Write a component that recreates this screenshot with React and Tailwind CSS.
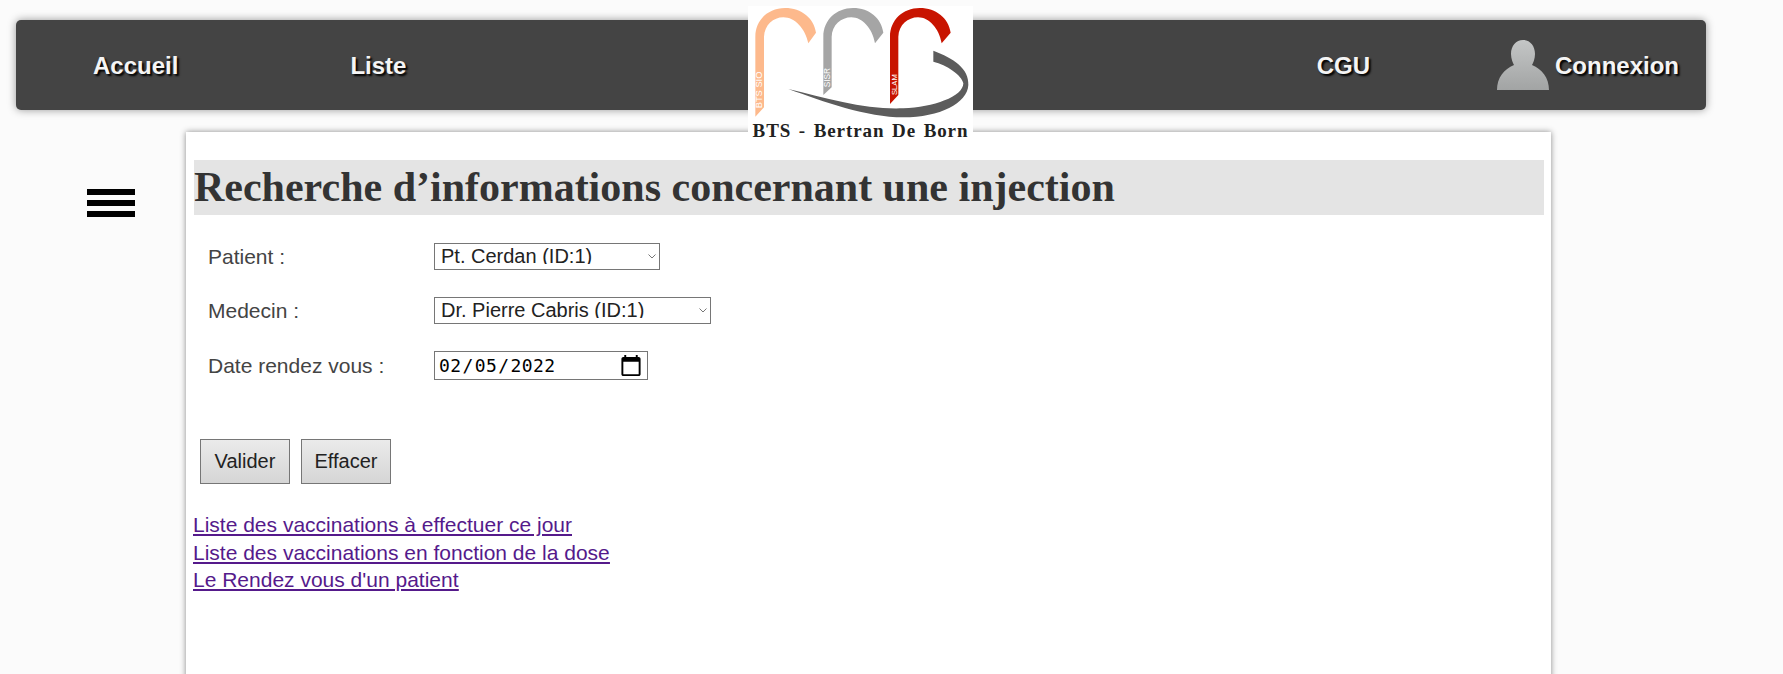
import React from "react";

const navText = "text-[24px] font-bold text-[#f5f5f5] [text-shadow:2px_2px_2px_#000] pt-[1px]";

// Logo of the school, three arches and a swoosh
const Logo = () => (
  <div className="absolute left-[748px] top-[6px] w-[225px] h-[136px] bg-white flex flex-col items-center">
    <svg viewBox="24 18 675 351" className="w-[225px] h-[117px] shrink-0">
      <path d="M46 350L46 110C46 60 85 24 135 24C185 24 222 55 228 98L205 130C195 85 165 52 130 52C100 52 74 75 72 110L72 322Z" fill="#fdb98c" />
      <path d="M250 285L250 110C250 60 289 24 339 24C389 24 424 55 430 98L405 130C397 85 367 52 334 52C304 52 276 75 275 110L275 262Z" fill="#a5a5a5" />
      <path d="M450 312L450 110C450 60 489 24 539 24C589 24 626 55 632 98L605 130C597 85 567 52 534 52C504 52 476 75 475 110L475 285Z" fill="#c81400" />
      <path d="M580 152C640 175 688 205 685 255C682 310 600 352 490 352C380 352 250 305 145 267C260 295 380 330 490 325C580 322 670 290 670 250C665 225 620 195 580 185Z" fill="#5c5c5c" />
      <text transform="translate(66 325) rotate(-90)" fill="#fff" fontSize="28" fontFamily="Liberation Sans, sans-serif">BTS SIO</text>
      <text transform="translate(270 262) rotate(-90)" fill="#fff" fontSize="25" fontFamily="Liberation Sans, sans-serif">SISR</text>
      <text transform="translate(470 285) rotate(-90)" fill="#fff" fontSize="23" fontFamily="Liberation Sans, sans-serif">SLAM</text>
    </svg>
    <div className="-mt-[2px] font-['Liberation_Serif',serif] font-bold text-[19px] leading-[20px] tracking-[0.9px] [word-spacing:2px] text-[#222] whitespace-nowrap">
      BTS - Bertran De Born
    </div>
  </div>
);

const UserIcon = () => (
  <svg viewBox="0 0 52 50" className="w-[52px] h-[50px]">
    <defs>
      <linearGradient id="userGrad" x1="0" y1="0" x2="0" y2="1">
        <stop offset="0" stopColor="#c4c6c6" />
        <stop offset="1" stopColor="#a2a4a4" />
      </linearGradient>
    </defs>
    <path d="M26 0C33 0 38 6 38 14C38 19 36 23 35 25C45 29 52 38 52 50L0 50C0 38 7 29 17 25C16 23 14 19 14 14C14 6 19 0 26 0Z" fill="url(#userGrad)" />
  </svg>
);

const Row = ({ label, children, className }) => (
  <div className={`flex items-center ${className}`}>
    <label className="w-[226px] text-[21px] text-[#444]">{label}</label>
    {children}
  </div>
);

// Select with a thin chevron drawn over it, the border sits on the wrapper
const Select = ({ option, width }) => (
  <div className={`relative h-[27px] overflow-hidden border border-[#767676] bg-white ${width}`}>
    <select className="appearance-none block w-full h-[28px] -mt-[3px] pl-[6px] pb-[5px] bg-transparent text-[20px] text-[#222]">
      <option>{option}</option>
    </select>
    <svg viewBox="0 0 8 5" className="absolute right-[3px] top-[10px] w-[8px] h-[5px] pointer-events-none">
      <path d="M0.5 0.5L4 4L7.5 0.5" fill="none" stroke="#777" strokeWidth="1" />
    </svg>
  </div>
);

const App = () => {
  const buttonClass = "w-[90px] h-[45px] pb-[2px] border border-[#767676] bg-gradient-to-b from-[#ebebeb] to-[#d5d5d5] text-[20px] text-[#222]";

  return (
    <div className="relative h-screen overflow-hidden bg-[#fbfbfb] font-['Liberation_Sans',sans-serif]">
      {/* barre de navigation */}
      <nav className="mt-[20px] ml-[16px] w-[1690px] h-[90px] bg-[#444444] rounded-[5px] shadow-[0_0_8px_rgba(0,0,0,0.4)] flex items-center absolute top-0 left-0">
        <a className={`${navText} ml-[77px]`}>Accueil</a>
        <a className={`${navText} ml-[172px]`}>Liste</a>
        <a className={`${navText} ml-auto mr-[127px]`}>CGU</a>
        <UserIcon />
        <a className={`${navText} ml-[6px] mr-[27px]`}>Connexion</a>
      </nav>

      <div className="flex pt-[132px]">
        <div className="w-[186px] shrink-0 pt-[57px] pl-[87px]">
          <div className="w-[48px] flex flex-col gap-[5px]">
            <div className="h-[6px] bg-black" />
            <div className="h-[6px] bg-black" />
            <div className="h-[6px] bg-black" />
          </div>
        </div>

        <main className="w-[1365px] h-[600px] bg-white shadow-[0_0_6px_rgba(0,0,0,0.45)] pt-[28px] pl-[8px] pr-[7px]">
          <h1 className="h-[55px] bg-[#e4e4e4] font-['Liberation_Serif',serif] font-bold text-[42px] leading-[55px] text-[#333] whitespace-nowrap">
            Recherche d’informations concernant une injection
          </h1>

          <div className="pl-[14px] pt-[28px]">
            <Row label="Patient :" className="h-[27px]">
              <Select option="Pt. Cerdan (ID:1)" width="w-[226px]" />
            </Row>
            <Row label="Medecin :" className="h-[27px] mt-[27px]">
              <Select option="Dr. Pierre Cabris (ID:1)" width="w-[277px]" />
            </Row>
            <Row label="Date rendez vous :" className="h-[29px] mt-[27px]">
              <input
                type="date"
                defaultValue="2022-02-05"
                className="w-[214px] h-[29px] border border-[#767676] bg-white pl-[3px] pr-[4px] font-['DejaVu_Sans_Mono',monospace] text-[18px] tracking-[0.4px] text-black [&::-webkit-calendar-picker-indicator]:w-[24px] [&::-webkit-calendar-picker-indicator]:h-[24px] [&::-webkit-calendar-picker-indicator]:p-0 [&::-webkit-calendar-picker-indicator]:m-0"
              />
            </Row>
          </div>

          <div className="flex gap-[11px] pl-[6px] mt-[59px]">
            <button className={buttonClass}>Valider</button>
            <button className={buttonClass}>Effacer</button>
          </div>

          <div className="-ml-[1px] mt-[27px] flex flex-col items-start text-[21px] leading-[27.5px] text-[#551a8b] underline">
            <a href="#">Liste des vaccinations à effectuer ce jour</a>
            <a href="#">Liste des vaccinations en fonction de la dose</a>
            <a href="#">Le Rendez vous d'un patient</a>
          </div>
        </main>
      </div>

      <Logo />
    </div>
  );
};

export default App;
